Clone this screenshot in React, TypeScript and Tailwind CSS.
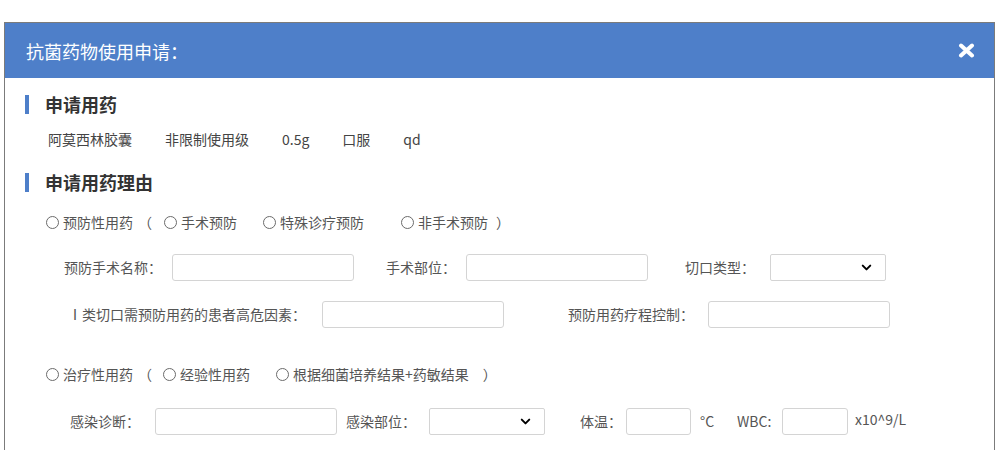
import { ChevronDown } from "lucide-react";

const Radio = ({ label, className = "" }: { label: string; className?: string }) => (
  <span className={`inline-flex items-center ${className}`}>
    <span className="w-[13px] h-[13px] rounded-full border border-[#6b6b6b] bg-white mr-[4px]" />
    <span>{label}</span>
  </span>
);

const Input = ({ w }: { w: string }) => (
  <input
    type="text"
    className={`${w} h-[27px] border border-[#d4d4d4] rounded-[3px] bg-white outline-none px-2 text-sm`}
  />
);

const Select = () => (
  <div className="w-[116px] h-[27px] border border-[#d4d4d4] rounded-[2px] bg-white flex items-center justify-end pr-[11px]">
    <ChevronDown className="w-[15px] h-[15px] text-black" strokeWidth={3.2} />
  </div>
);

const SectionTitle = ({ title, className = "" }: { title: string; className?: string }) => (
  <div className={`flex items-center h-[20px] ${className}`}>
    <span className="ml-[20px] w-[4px] h-[19px] bg-[#4e7fc9]" />
    <span className="ml-[16px] text-[18px] leading-[20px] font-bold text-[#333]">{title}</span>
  </div>
);

export default function App() {
  return (
    <div className="w-[1000px] h-[450px] overflow-hidden bg-white pt-[22px] pl-[4px] font-['Noto_Sans_CJK_SC',sans-serif]">
      <div className="w-[991px] h-[520px] border border-[#7b7b7b] bg-white">
        {/* Header */}
        <div className="h-[55px] bg-[#4e7fc9] flex items-center justify-between pl-[21px] pr-[19px]">
          <span className="text-white text-[18px] leading-[24px]">抗菌药物使用申请：</span>
          <svg width="17" height="15" viewBox="0 0 17 15">
            <path d="M3 2.5 L14 12.5 M14 2.5 L3 12.5" stroke="white" strokeWidth="4" strokeLinecap="round" />
          </svg>
        </div>

        {/* 申请用药 */}
        <SectionTitle title="申请用药" className="mt-[16px]" />
        <div className="mt-[15px] h-[20px] flex items-center gap-[33px] pl-[43px] text-[14px] leading-[20px] text-[#444]">
          <span>阿莫西林胶囊</span>
          <span>非限制使用级</span>
          <span>0.5g</span>
          <span>口服</span>
          <span>qd</span>
        </div>

        {/* 申请用药理由 */}
        <SectionTitle title="申请用药理由" className="mt-[23px]" />

        <div className="mt-[20px] h-[20px] flex items-center text-[14px] leading-[20px] text-[#555]">
          <Radio label="预防性用药" className="ml-[41px]" />
          <span className="ml-[5px]">（</span>
          <Radio label="手术预防" className="ml-[12px]" />
          <Radio label="特殊诊疗预防" className="ml-[26px]" />
          <Radio label="非手术预防" className="ml-[37px]" />
          <span className="ml-[8px]">）</span>
        </div>

        <div className="mt-[22px] h-[27px] flex items-center text-[14px] text-[#555]">
          <span className="ml-[59px] w-[108px]">预防手术名称：</span>
          <Input w="w-[182px]" />
          <span className="ml-[32px] w-[80px]">手术部位：</span>
          <Input w="w-[182px]" />
          <span className="ml-[37px] w-[85px]">切口类型：</span>
          <Select />
        </div>

        <div className="mt-[20px] h-[27px] flex items-center text-[14px] text-[#555]">
          <span className="ml-[63px] w-[254px]">Ⅰ类切口需预防用药的患者高危因素：</span>
          <Input w="w-[182px]" />
          <span className="ml-[64px] w-[140px]">预防用药疗程控制：</span>
          <Input w="w-[182px]" />
        </div>

        <div className="mt-[36px] h-[20px] flex items-center text-[14px] leading-[20px] text-[#555]">
          <Radio label="治疗性用药" className="ml-[41px]" />
          <span className="ml-[5px]">（</span>
          <Radio label="经验性用药" className="ml-[11px]" />
          <Radio label="根据细菌培养结果+药敏结果" className="ml-[26px]" />
          <span className="ml-[14px]">）</span>
        </div>

        <div className="mt-[24px] h-[27px] flex items-center text-[14px] text-[#555]">
          <span className="ml-[65px] w-[85px]">感染诊断：</span>
          <Input w="w-[182px]" />
          <span className="ml-[9px] w-[83px]">感染部位：</span>
          <Select />
          <span className="ml-[35px] w-[46px]">体温：</span>
          <Input w="w-[65px]" />
          <span className="ml-[9px] w-[37px]">°C</span>
          <span className="w-[45px]">WBC:</span>
          <Input w="w-[66px]" />
          <span className="ml-[7px] self-start mt-[1px]">x10^9/L</span>
        </div>
      </div>
    </div>
  );
}
